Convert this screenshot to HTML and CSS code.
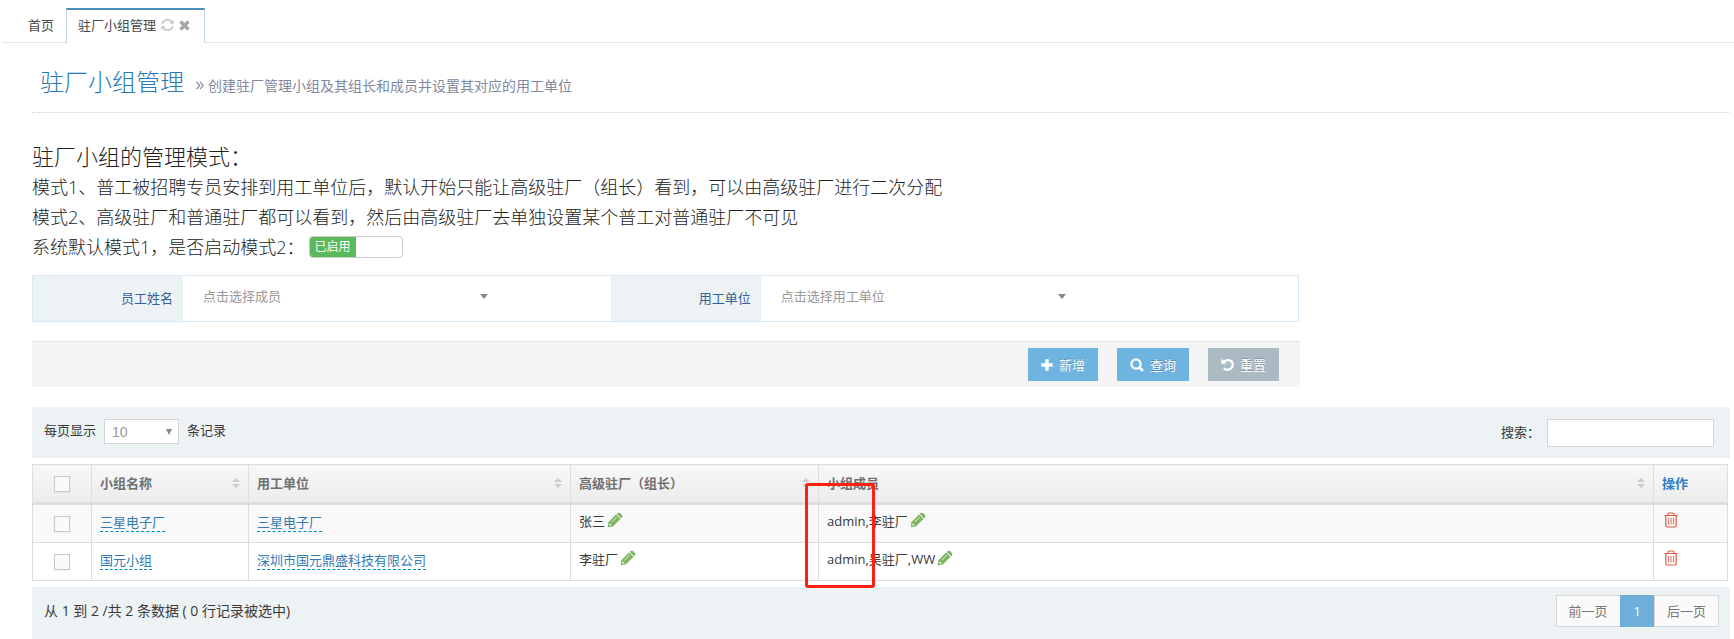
FILE: index.html
```html
<!DOCTYPE html>
<html lang="zh-CN">
<head>
<meta charset="utf-8">
<meta name="viewport" content="width=device-width, initial-scale=1">
<title>驻厂小组管理</title>
<link rel="stylesheet" href="styles.css">
</head>
<body>
<svg class="sprite" aria-hidden="true">
  <symbol id="pencil" viewBox="0 0 16 16">
    <path fill="#7db560" d="M.8 15.200l.6-5L9.300 2.300l4.400 4.400L5.800 14.600z"/>
    <path fill="#7db560" d="M10.300 1.300c.8-.8 2.200-.8 3 0l1.400 1.400c.8.800.8 2.200 0 3l-.6.600-4.400-4.400z"/>
    <path d="M9.300 2.300l4.400 4.400M4.600 10.200l5.200-5.200" stroke="#fff" stroke-width=".8" fill="none"/>
    <path d="M2.600 11.200l2.200 2.200-1.600.400-1-1z" fill="#fff"/>
  </symbol>
  <symbol id="trash" viewBox="0 0 14 16">
    <path d="M.5 3.500h13M4 3.300V2.500Q4 1 5.500 1h3Q10 1 10 2.500v.8M1.800 3.500v10Q1.800 15 3.300 15h7.400q1.500 0 1.500-1.500v-10" fill="none" stroke="#dd5a43" stroke-width="1.200"/>
    <path d="M4.500 6v6.500M7 6v6.500M9.500 6v6.500" stroke="#e58373" stroke-width="1.200"/>
  </symbol>
</svg>

<nav>
  <ul class="tabs">
    <li><a class="tab" href="#home">首页</a></li>
    <li class="tab tab-active">
      <a href="#team">驻厂小组管理</a>
      <button class="tab-button" type="button" aria-label="刷新">
        <svg width="13" height="12" viewBox="0 0 13 12" fill="none" stroke="#c4c4c4" stroke-width="1.500"><path d="M1.200 5A5.300 5.300 0 0 1 10.500 2.800M11.800 7A5.300 5.300 0 0 1 2.500 9.200"/><path fill="#c4c4c4" stroke="none" d="M12.500.5v4.200H8.300zM.5 11.500V7.300h4.200z"/></svg>
      </button>
      <button class="tab-button" type="button" aria-label="关闭">
        <svg width="11" height="11" viewBox="0 0 11 11" stroke="#a6a6a6" stroke-width="3.400"><path d="M1.500 1.500l8 8M9.500 1.500l-8 8"/></svg>
      </button>
    </li>
  </ul>
</nav>

<main class="page">
  <header class="page-header">
    <h1 class="page-title">驻厂小组管理</h1>
    <svg width="8" height="9" viewBox="0 0 8 9" fill="none" stroke="#8089a0" stroke-width="1.200"><path d="M.5.800l3.300 3.700L.5 8.200M4 .800l3.300 3.700L4 8.200"/></svg>
    <p class="page-subtitle">创建驻厂管理小组及其组长和成员并设置其对应的用工单位</p>
  </header>

  <section class="intro">
    <h2 class="intro-title">驻厂小组的管理模式：</h2>
    <p class="intro-line">模式1、普工被招聘专员安排到用工单位后，默认开始只能让高级驻厂（组长）看到，可以由高级驻厂进行二次分配</p>
    <p class="intro-line">模式2、高级驻厂和普通驻厂都可以看到，然后由高级驻厂去单独设置某个普工对普通驻厂不可见</p>
    <div class="intro-line mode-row">
      <span id="mode-label">系统默认模式1，是否启动模式2：</span>
      <button class="switch" type="button" role="switch" aria-checked="true" aria-labelledby="mode-label"><span class="switch-on">已启用</span></button>
    </div>
  </section>

  <form class="filter">
    <div class="filter-fields">
      <label class="filter-label" for="member">员工姓名</label>
      <div class="filter-value">
        <span class="select filter-select"><select id="member"><option>点击选择成员</option></select></span>
      </div>
      <label class="filter-label" for="company">用工单位</label>
      <div class="filter-value">
        <span class="select filter-select"><select id="company"><option>点击选择用工单位</option></select></span>
      </div>
    </div>
    <div class="filter-actions">
      <button class="button" type="button"><svg width="12" height="12" viewBox="0 0 12 12" stroke="#fff" stroke-width="3.400"><path d="M6 0.300v11.400M.3 6h11.400"/></svg>新增</button>
      <button class="button" type="button"><svg width="14" height="14" viewBox="0 0 14 14" fill="none" stroke="#fff" stroke-width="2.200"><circle cx="6" cy="6" r="4.600"/><path d="M9.300 9.300l3.600 3.600" stroke-width="2.800"/></svg>查询</button>
      <button class="button button-muted" type="reset"><svg width="13" height="13" viewBox="0 0 13 13" fill="none" stroke="#fff" stroke-width="2.200"><path d="M2.800 3.600C7 .4 11.800 2.600 11.800 6.600c0 4.600-5.600 6.800-9 3.800"/><path fill="#fff" stroke="none" d="M.3.600l5.200 5.200H.3z"/></svg>重置</button>
    </div>
  </form>

  <div class="toolbar">
    <div class="page-size">
      <label for="size">每页显示</label>
      <span class="select size-select"><select id="size"><option>10</option></select></span>
      <span>条记录</span>
    </div>
    <div class="search">
      <label for="search">搜索：</label>
      <input class="search-input" id="search" type="text">
    </div>
  </div>

  <table class="grid">
    <colgroup>
      <col class="col-check"><col class="col-name"><col class="col-company"><col class="col-leader"><col><col class="col-action">
    </colgroup>
    <thead>
      <tr>
        <th class="check-cell"><input class="check" type="checkbox" aria-label="全选"></th>
        <th><div class="head">小组名称<span class="sort"></span></div></th>
        <th><div class="head">用工单位<span class="sort"></span></div></th>
        <th><div class="head">高级驻厂（组长）<span class="sort"></span></div></th>
        <th class="members-head"><div class="head">小组成员<span class="sort"></span></div><span class="marker"></span></th>
        <th class="action-head">操作</th>
      </tr>
    </thead>
    <tbody>
      <tr>
        <td class="check-cell"><input class="check" type="checkbox" aria-label="选择三星电子厂"></td>
        <td><a class="editable" href="#name-1">三星电子厂</a></td>
        <td><a class="editable" href="#company-1">三星电子厂</a></td>
        <td>张三<button class="icon-button" type="button" aria-label="编辑组长"><svg width="16" height="16"><use href="#pencil"/></svg></button></td>
        <td>admin,李驻厂<button class="icon-button" type="button" aria-label="编辑成员"><svg width="16" height="16"><use href="#pencil"/></svg></button></td>
        <td><button class="icon-button" type="button" aria-label="删除"><svg width="14" height="16"><use href="#trash"/></svg></button></td>
      </tr>
      <tr>
        <td class="check-cell"><input class="check" type="checkbox" aria-label="选择国元小组"></td>
        <td><a class="editable" href="#name-2">国元小组</a></td>
        <td><a class="editable" href="#company-2">深圳市国元鼎盛科技有限公司</a></td>
        <td>李驻厂<button class="icon-button" type="button" aria-label="编辑组长"><svg width="16" height="16"><use href="#pencil"/></svg></button></td>
        <td>admin,吴驻厂,WW<button class="icon-button" type="button" aria-label="编辑成员"><svg width="16" height="16"><use href="#pencil"/></svg></button></td>
        <td><button class="icon-button" type="button" aria-label="删除"><svg width="14" height="16"><use href="#trash"/></svg></button></td>
      </tr>
    </tbody>
  </table>

  <footer class="table-footer">
    <p class="summary">从 1 到 2 /共 2 条数据 ( 0 行记录被选中)</p>
    <nav class="pagination">
      <a class="page-link" href="#prev">前一页</a>
      <a class="page-link page-current" href="#1">1</a>
      <a class="page-link" href="#next">后一页</a>
    </nav>
  </footer>
</main>
</body>
</html>
```
FILE: styles.css
```css
* { box-sizing: border-box; }

body {
  margin: 0;
  background: #fff;
  color: #393939;
  font: 13px/20px "Open Sans", "Noto Sans CJK SC", sans-serif;
}

h1, h2, p, ul { margin: 0; padding: 0; font-weight: 400; }
a { color: inherit; text-decoration: none; }
button, input, select { margin: 0; font: inherit; color: inherit; }
button { padding: 0; border: 0; background: none; }
svg { flex: none; }
.sprite { display: none; }

/* Tabs */
.tabs {
  display: flex;
  align-items: flex-end;
  height: 43px;
  margin-left: 2px;
  padding-left: 14px;
  border-bottom: 1px solid #dbe7f1;
  list-style: none;
  color: #4a4a4a;
}
.tab {
  display: flex;
  align-items: center;
  height: 34px;
  padding: 0 12px;
}
.tab-active {
  gap: 5px;
  height: 35px;
  margin-bottom: -1px;
  padding: 0 14px 3px 11px;
  border: 1px solid #c5d5e3;
  border-top: 2px solid #4c8fbd;
  border-bottom: 0;
  background: #fff;
}
.tab-button { display: flex; }

/* Page heading */
.page { padding: 0 4px 0 32px; }
.page-header {
  display: flex;
  align-items: center;
  gap: 4px;
  height: 70px;
  padding: 16px 0 0 8px;
  border-bottom: 1px dotted #d5d5d5;
}
.page-title {
  margin-right: 8px;
  padding-bottom: 8px;
  color: #2679b5;
  font-size: 24px;
  font-weight: 300;
  line-height: 32px;
}
.page-subtitle { color: #8089a0; font-size: 14px; }

/* Mode description */
.intro { padding-top: 27px; color: #222; }
.intro-title { font-size: 22px; font-weight: 300; line-height: 32px; }
.intro-line { font-size: 18px; font-weight: 300; line-height: 30px; }
.mode-row { display: flex; align-items: center; gap: 4px; }
.switch {
  display: flex;
  width: 94px;
  height: 22px;
  border: 1px solid #ccc;
  border-radius: 4px;
  background: #fff;
  overflow: hidden;
}
.switch-on {
  width: 50%;
  background: #5cb85c;
  color: #fff;
  font-size: 12px;
  font-weight: 400;
  line-height: 20px;
}

/* Drop-downs */
.select { display: inline-grid; align-items: center; }
.select select {
  grid-area: 1 / 1;
  width: 100%;
  height: 100%;
  appearance: none;
  border: 0;
  background: none;
  color: #999;
}
.select::after {
  content: "";
  grid-area: 1 / 1;
  justify-self: end;
  border: 4px solid transparent;
  border-top: 5px solid #888;
  border-bottom: 0;
  pointer-events: none;
}

/* Filter form */
.filter { max-width: 1268px; padding-top: 13px; }
.filter-fields {
  display: grid;
  grid-template-columns: 150px 43fr 150px 54fr;
  height: 47px;
  margin-right: 1px;
  border: 1px solid #d9e8f5;
}
.filter-label {
  padding: 12px 10px;
  background: #edf2f5;
  color: #336199;
  text-align: right;
}
.filter-value { padding: 5px 20px; }
.filter-select { width: 285px; max-width: 100%; height: 30px; }
.filter-select select { padding: 0; }
.filter-actions {
  display: flex;
  justify-content: flex-end;
  gap: 19px;
  margin-top: 19px;
  padding: 6px 21px;
  border-top: 1px solid #e5e5e5;
  background: #f4f4f4;
}
.button {
  display: flex;
  align-items: center;
  gap: 6px;
  height: 33px;
  padding: 0 13px;
  background: #6fb3e0;
  color: #fff;
  text-shadow: 0 -1px 0 rgba(0, 0, 0, .25);
}
.button-muted { background: #abbac3; }

/* Table toolbar */
.toolbar {
  display: flex;
  justify-content: space-between;
  height: 51px;
  margin-top: 20px;
  padding: 12px 16px 0 12px;
  background: #edf2f5;
}
.page-size { display: flex; align-items: flex-start; gap: 8px; line-height: 22px; }
.size-select {
  width: 75px;
  height: 25px;
  border: 1px solid #d5d5d5;
  background: #fff;
}
.size-select select { padding: 0 7px; font-family: "Liberation Sans", sans-serif; font-size: 14px; }
.size-select::after { margin-right: 6px; border-width: 6px 3px 0; }
.search { display: flex; align-items: flex-start; gap: 7px; line-height: 26px; }
.search-input {
  width: 167px;
  height: 28px;
  padding: 0 6px;
  border: 1px solid #d5d5d5;
  background: #fff;
}

/* Data table */
.grid {
  width: calc(100% - 2px);
  margin: 6px 0;
  border-collapse: collapse;
  table-layout: fixed;
}
.col-check { width: 59px; }
.col-name { width: 157px; }
.col-company { width: 322px; }
.col-leader { width: 248px; }
.col-action { width: 74px; }
.grid th, .grid td {
  height: 38px;
  padding: 0 8px 4px;
  border: 1px solid #ddd;
  text-align: left;
}
.grid th {
  height: 39px;
  padding-bottom: 2px;
  border-bottom: 3px solid #ddd;
  background: linear-gradient(#f8f8f8, #ececec);
  color: #707070;
  font-weight: 700;
}
.grid tbody tr:first-child { background: #f9f9f9; }
.grid tbody tr:first-child td { height: 39px; }
.grid .action-head { color: #307ecc; }
.grid .check-cell { padding-bottom: 0; text-align: center; }
.head { display: flex; align-items: center; justify-content: space-between; }
.sort { display: grid; gap: 2px; }
.sort::before, .sort::after {
  content: "";
  border: 4px solid transparent;
  border-top-width: 0;
  border-bottom-color: #ccc;
}
.sort::after { border-width: 4px 4px 0; border-color: #ccc transparent; }
.check {
  display: block;
  width: 16px;
  height: 16px;
  margin: 0 auto;
  appearance: none;
  border: 1px solid #c8c8c8;
  background: #fafafa;
  box-shadow: 0 1px 2px rgba(0, 0, 0, .05);
}
.editable {
  display: inline-block;
  border-bottom: 1px dashed #0088cc;
  color: #337ab7;
  line-height: 18px;
}
.icon-button { margin: 0 2px; padding-bottom: 4px; vertical-align: middle; }
.icon-button svg { display: block; }

/* Red frame drawn over the member column */
.members-head { position: relative; }
.marker {
  position: absolute;
  top: 18px;
  left: -14px;
  width: 70px;
  height: 105px;
  border: 3px solid #ff2014;
  border-radius: 3px;
  pointer-events: none;
}

/* Table footer */
.table-footer {
  display: flex;
  align-items: flex-start;
  justify-content: space-between;
  height: 52px;
  padding: 8px 11px 0 12px;
  background: #edf2f5;
}
.summary { font-size: 14px; line-height: 32px; }
.pagination { display: flex; }
.page-link {
  height: 32px;
  padding: 0 12px;
  border: 1px solid #d9d9d9;
  background: #fafafa;
  color: #777;
  line-height: 30px;
}
.page-current {
  margin: 0 -1px;
  padding: 0 13px;
  border-color: #6faed9;
  background: #6faed9;
  color: #fff;
}
```
